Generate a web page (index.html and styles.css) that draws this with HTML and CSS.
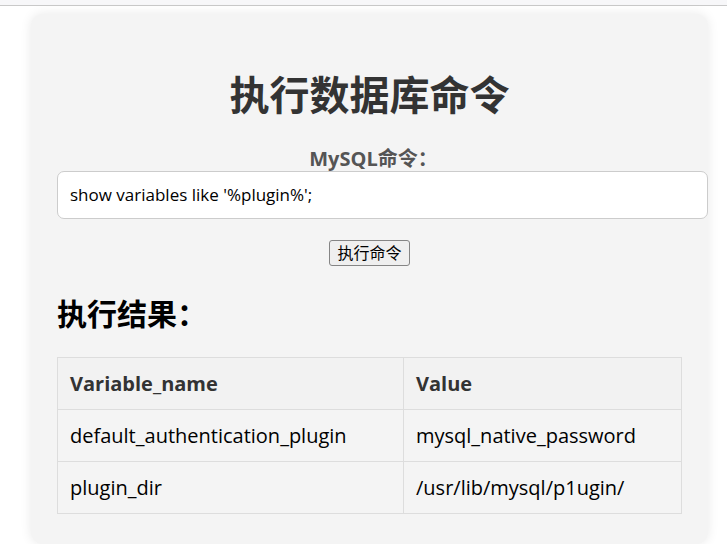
FILE: index.html
```html
<!DOCTYPE html>
<html lang="zh-CN">
<head>
<meta charset="utf-8">
<title>执行数据库命令</title>
<link rel="stylesheet" href="styles.css">
</head>
<body>
<div class="topbar"></div>
<div class="card">
  <h1 class="title">执行数据库命令</h1>
  <form class="cmd-form">
    <label class="cmd-label" for="cmd">MySQL命令：</label>
    <input class="cmd-input" id="cmd" type="text" value="show variables like '%plugin%';">
    <div class="btn-row"><button class="btn" type="button">执行命令</button></div>
  </form>
  <h2 class="result-title">执行结果：</h2>
  <table class="result">
    <colgroup><col class="col-name"><col class="col-value"></colgroup>
    <thead>
      <tr><th>Variable_name</th><th>Value</th></tr>
    </thead>
    <tbody>
      <tr><td>default_authentication_plugin</td><td>mysql_native_password</td></tr>
      <tr><td>plugin_dir</td><td>/usr/lib/mysql/p1ugin/</td></tr>
    </tbody>
  </table>
</div>
</body>
</html>
```

FILE: styles.css
```css
* { box-sizing: content-box; }
html, body { margin: 0; padding: 0; background: #fff; }
body {
  font-family: "Open Sans", "Noto Sans CJK SC", sans-serif;
  font-size: 20px;
  color: #000;
}
.topbar {
  height: 5px;
  background: #f7f7f9;
  border-bottom: 1px solid #c9c9c9;
}
.card {
  margin: 8px 0 0 31px;
  width: 625px;
  padding: 20px 26px 30px 26px;
  background: #f4f4f4;
  border-radius: 12px;
  box-shadow: 0 0 12px rgba(0,0,0,0.09);
}
.title {
  margin: 33px 0 24px 0;
  font-size: 40px;
  line-height: 56px;
  font-weight: bold;
  text-align: center;
  color: #333;
}
.cmd-form { margin: 0; }
.cmd-label {
  display: block;
  text-align: center;
  font-weight: bold;
  font-size: 20px;
  line-height: 24px;
  color: #555;
  padding-left: 8px;
}
.cmd-input {
  display: block;
  width: 100%;
  margin: 0;
  padding: 12px;
  font-family: "Open Sans", "Noto Sans CJK SC", sans-serif;
  font-size: 17px;
  line-height: 22px;
  color: #000;
  background: #fff;
  border: 1px solid #ccc;
  border-radius: 7px;
  outline: none;
}
.btn-row {
  text-align: center;
  margin-top: 21px;
  line-height: 0;
}
.btn {
  font-family: "Open Sans", "Noto Sans CJK SC", sans-serif;
  font-size: 16px;
  line-height: 20px;
  padding: 2px 7px;
  margin: 0;
  color: #000;
  background: #efefef;
  border: 1px solid #858585;
  border-radius: 3px;
}
.result-title {
  margin: 28px 0 23px 0;
  font-size: 30px;
  line-height: 40px;
  font-weight: bold;
  color: #000;
}
.result {
  width: 624px;
  border-collapse: collapse;
  table-layout: fixed;
}
.col-name { width: 346px; }
.result th, .result td {
  border: 1px solid #ddd;
  padding: 12px;
  text-align: left;
  font-size: 20px;
  line-height: 27px;
}
.result th {
  background: #f2f2f2;
  color: #333;
  font-weight: bold;
}
.result td { color: #000; }
```
